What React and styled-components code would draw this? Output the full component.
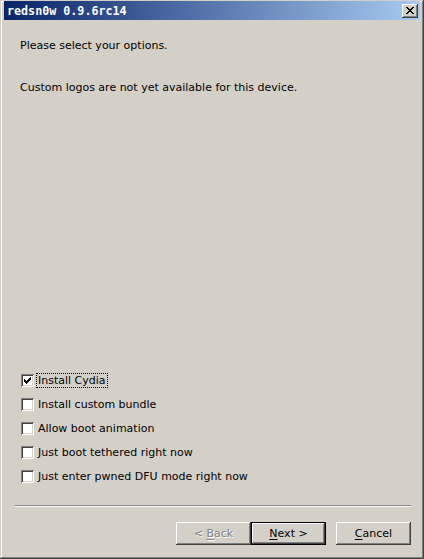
import React from "react";
import styled, { createGlobalStyle } from "styled-components";

const GlobalStyle = createGlobalStyle`
  html, body { margin: 0; padding: 0; background: #d4d0c8; overflow: hidden; }
  * { box-sizing: border-box; }
`;

const Window = styled.div`
  width: 424px;
  height: 559px;
  display: flex;
  flex-direction: column;
  background: #d4d0c8;
  padding: 1px 4px 4px 4px;
  box-shadow: inset -1px -1px #404040, inset 1px 1px #d4d0c8,
    inset -2px -2px #808080, inset 2px 2px #ffffff;
  font-family: "DejaVu Sans", Verdana, sans-serif;
  font-size: 11px;
  color: #000;
`;

const TitleBar = styled.div`
  height: 19px;
  display: flex;
  align-items: center;
  justify-content: space-between;
  padding: 0 2px 0 3px;
  background: linear-gradient(to right, #0a246a, #a6caf0);
`;

const TitleText = styled.span`
  font-family: "DejaVu Sans Mono", monospace;
  font-weight: bold;
  font-size: 11.7px;
  color: #fff;
  white-space: nowrap;
`;

const CloseButton = styled.div`
  width: 16px;
  height: 14px;
  background: #d4d0c8;
  box-shadow: inset -1px -1px #404040, inset 1px 1px #ffffff,
    inset -2px -2px #808080, inset 2px 2px #d4d0c8;
  display: flex;
  padding: 3px 0 0 4px;
`;

const Body = styled.div`
  flex: 1;
  display: flex;
  flex-direction: column;
  padding: 0 9px 0 11px;
`;

const Paragraph = styled.p`
  margin: ${(p) => p.$top}px 0 0 0;
  padding-left: 5px;
  line-height: 13px;
  white-space: nowrap;
`;

const Options = styled.div`
  margin-top: auto;
  display: flex;
  flex-direction: column;
  gap: 11px;
  padding-left: 6px;
`;

const Row = styled.label`
  display: flex;
  align-items: center;
  height: 13px;
  gap: 4px;
`;

const Box = styled.span`
  width: 13px;
  height: 13px;
  flex: none;
  background: #fff;
  box-shadow: inset 1px 1px #808080, inset -1px -1px #ffffff,
    inset 2px 2px #404040, inset -2px -2px #d4d0c8;
  display: flex;
`;

const Label = styled.span`
  line-height: 13px;
  padding: 0 1px;
  margin-left: -1px;
  white-space: nowrap;
  outline: ${(p) => (p.$focused ? "1px dotted #000" : "none")};
  outline-offset: 0;
`;

const Separator = styled.div`
  margin-top: 22px;
  height: 2px;
  border-top: 1px solid #808080;
  border-bottom: 1px solid #ffffff;
`;

const ButtonRow = styled.div`
  display: flex;
  justify-content: flex-end;
  margin-top: 15px;
  margin-bottom: 10px;
`;

const Button = styled.div`
  width: 75px;
  height: 23px;
  display: flex;
  align-items: center;
  justify-content: center;
  background: #d4d0c8;
  margin-left: ${(p) => p.$gap || 0}px;
  color: ${(p) => (p.$disabled ? "#808080" : "#000")};
  text-shadow: ${(p) => (p.$disabled ? "1px 1px 0 #ffffff" : "none")};
  box-shadow: ${(p) =>
    p.$default
      ? "inset 0 0 0 1px #000, inset -2px -2px #404040, inset 2px 2px #ffffff, inset -3px -3px #808080"
      : "inset -1px -1px #404040, inset 1px 1px #ffffff, inset -2px -2px #808080, inset 2px 2px #d4d0c8"};
  padding-bottom: 1px;
  u { text-decoration: underline; text-underline-offset: 2px; }
`;

const Caption = styled.span`
  white-space: pre;
`;

const Pixels = ({ rows, w, h }) => (
  <svg width={w} height={h} viewBox={`0 0 ${w} ${h}`} shapeRendering="crispEdges">
    {rows.flatMap((r, y) =>
      r.split("").map((c, x) =>
        c === "#" ? <rect key={`${x}-${y}`} x={x} y={y} width="1" height="1" fill="#000" /> : null
      )
    )}
  </svg>
);

const CLOSE = [
  "##....##",
  ".##..##.",
  "..####..",
  "...##...",
  "..####..",
  ".##..##.",
  "##....##",
];

const CHECK = [
  ".............",
  ".............",
  ".............",
  ".........#...",
  "........##...",
  "...#...###...",
  "...##.###....",
  "...#####.....",
  "....###......",
  ".....#.......",
  ".............",
  ".............",
  ".............",
];

const options = [
  { text: "Install Cydia", checked: true, focused: true },
  { text: "Install custom bundle" },
  { text: "Allow boot animation" },
  { text: "Just boot tethered right now" },
  { text: "Just enter pwned DFU mode right now" },
];

export default function App() {
  return (
    <>
      <GlobalStyle />
      <Window>
        <TitleBar>
          <TitleText>redsn0w 0.9.6rc14</TitleText>
          <CloseButton>
            <Pixels rows={CLOSE} w={8} h={7} />
          </CloseButton>
        </TitleBar>
        <Body>
          <Paragraph $top={19}>Please select your options.</Paragraph>
          <Paragraph $top={29}>Custom logos are not yet available for this device.</Paragraph>
          <Options>
            {options.map((o) => (
              <Row key={o.text}>
                <Box>{o.checked && <Pixels rows={CHECK} w={13} h={13} />}</Box>
                <Label $focused={o.focused}>{o.text}</Label>
              </Row>
            ))}
          </Options>
          <Separator />
          <ButtonRow>
            <Button $disabled>
              <Caption>{"< "}<u>B</u>ack</Caption>
            </Button>
            <Button $default>
              <Caption><u>N</u>{"ext >"}</Caption>
            </Button>
            <Button $gap={10}>
              <Caption><u>C</u>ancel</Caption>
            </Button>
          </ButtonRow>
        </Body>
      </Window>
    </>
  );
}
